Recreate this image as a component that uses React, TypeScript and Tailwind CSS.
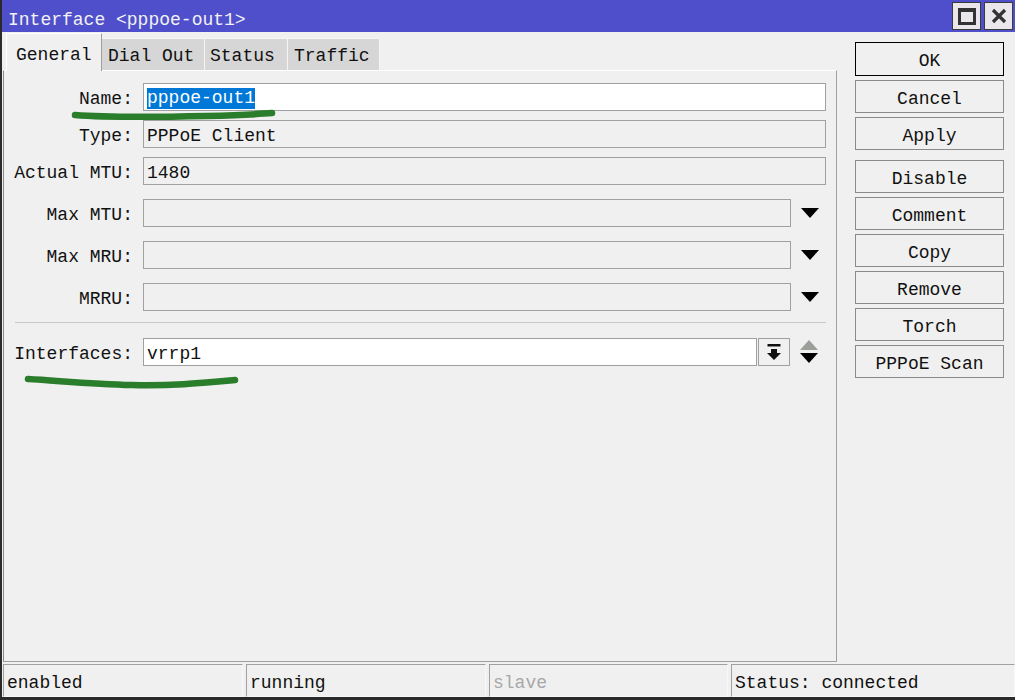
import React from 'react';

const mono = { fontFamily: '"Liberation Mono", "DejaVu Sans Mono", monospace' };

const Field: React.FC<{ label: string; value?: string; white?: boolean; selected?: boolean; w: string; mt: string }> = ({ label, value, white, selected, w, mt }) => (
  <div className={`flex items-center h-[28px] ${mt}`}>
    <div className="w-[131px] text-right pr-[2px] pt-[4px]">{label}:</div>
    <div className={`${w} h-[28px] ml-[8px] border border-[#a0a0a0] flex items-center pl-[3px] pt-[3px] ${white ? 'bg-white' : 'bg-[#f0f0f0]'}`}>
      {selected ? <span className="bg-[#0078d7] text-white leading-[21px]">{value}</span> : <span>{value}</span>}
    </div>
  </div>
);

const DownTri = () => (
  <svg width="20" height="12" viewBox="0 0 20 12" className="ml-[9px]">
    <polygon points="1,1 19,1 10,11" fill="#000" />
  </svg>
);

const App: React.FC = () => {
  const buttons = ['Cancel', 'Apply', 'Disable', 'Comment', 'Copy', 'Remove', 'Torch', 'PPPoE Scan'];
  const status = [
    { t: 'enabled', c: 'text-[#111]', w: 'w-[240px]' },
    { t: 'running', c: 'text-[#111]', w: 'w-[240px]' },
    { t: 'slave', c: 'text-[#a8a8a8]', w: 'w-[239px]' },
    { t: 'Status: connected', c: 'text-[#111]', w: 'flex-1' },
  ];

  return (
    <div className="relative w-[1015px] h-[700px] bg-[#f0f0f0] flex flex-col text-[18px] leading-[20px] text-[#111] border-l-2 border-b-[3px] border-[#2a2a2a] overflow-hidden" style={mono}>
      {/* title bar */}
      <div className="h-[32px] bg-[#4f4fcc] flex items-center justify-between pl-[6px] pr-[2px] shrink-0">
        <span className="text-[#f2f2f2] pt-[7px]">Interface &lt;pppoe-out1&gt;</span>
        <div className="flex gap-[3px]">
          <div className="w-[29px] h-[28px] bg-[#e9e7ec] border border-[#3a3a3a] flex items-center justify-center">
            <div className="w-[18px] h-[17px] border-[3px] border-[#333] border-t-[4px]" />
          </div>
          <div className="w-[29px] h-[28px] bg-[#e9e7ec] border border-[#3a3a3a] flex items-center justify-center">
            <svg width="16" height="16" viewBox="0 0 16 16">
              <path d="M2 2 L14 14 M14 2 L2 14" stroke="#333" strokeWidth="3.2" />
            </svg>
          </div>
        </div>
      </div>

      <div className="flex flex-1 min-h-0">
        {/* left pane */}
        <div className="w-[834px] ml-[1px] flex flex-col">
          <div className="h-[38px] flex items-end pl-[3px]">
            <div className="h-[38px] w-[96px] bg-[#f0f0f0] border-t border-l border-white border-r border-r-[#a0a0a0] pl-[9px] pt-[11px] -mb-px relative z-10">General</div>
            <div className="h-[32px] w-[103px] bg-[#d6d6d6] border-t border-r border-[#f5f5f5] pl-[6px] pt-[7px]">Dial Out</div>
            <div className="h-[32px] w-[83px] bg-[#d6d6d6] border-t border-r border-[#f5f5f5] pl-[5px] pt-[7px]">Status</div>
            <div className="h-[32px] w-[92px] bg-[#d6d6d6] border-t border-r border-[#f5f5f5] pl-[6px] pt-[7px]">Traffic</div>
          </div>
          <div className="flex-1 border border-[#a0a0a0] border-t-white border-l-[#888] flex flex-col">
            <Field label="Name" value="pppoe-out1" white selected w="w-[683px]" mt="mt-[12px]" />
            <Field label="Type" value="PPPoE Client" w="w-[683px]" mt="mt-[9px]" />
            <Field label="Actual MTU" value="1480" w="w-[683px]" mt="mt-[9px]" />
            <div className="flex items-center mt-[14px]">
              <Field label="Max MTU" w="w-[648px]" mt="" />
              <DownTri />
            </div>
            <div className="flex items-center mt-[14px]">
              <Field label="Max MRU" w="w-[648px]" mt="" />
              <DownTri />
            </div>
            <div className="flex items-center mt-[14px]">
              <Field label="MRRU" w="w-[648px]" mt="" />
              <DownTri />
            </div>
            <div className="ml-[11px] w-[811px] h-px bg-[#c8c8c8] mt-[11px]" />
            <div className="flex items-center h-[28px] mt-[15px]">
              <div className="w-[131px] text-right pr-[2px] pt-[4px]">Interfaces:</div>
              <div className="w-[614px] h-[28px] ml-[8px] border border-[#a0a0a0] bg-white flex items-center pl-[3px] pt-[3px]">vrrp1</div>
              <div className="w-[32px] h-[28px] ml-[1px] border border-[#a0a0a0] bg-[#f0f0f0] flex items-center justify-center">
                <svg width="16" height="20" viewBox="0 0 16 20">
                  <rect x="1.5" y="2" width="13" height="2.5" fill="#111" />
                  <rect x="5" y="7" width="6" height="4" fill="#111" />
                  <polygon points="1,11 15,11 8,18" fill="#111" />
                </svg>
              </div>
              <svg width="20" height="26" viewBox="0 0 20 26" className="ml-[9px]">
                <polygon points="10,1 19,11 1,11" fill="#9aa098" />
                <polygon points="1,14 19,14 10,24" fill="#000" />
              </svg>
            </div>
          </div>
        </div>

        {/* right buttons */}
        <div className="ml-[18px] w-[149px] flex flex-col gap-[4px] pt-[10px]">
          <div className="h-[34px] border border-black flex items-center justify-center pt-[4px]">OK</div>
          {buttons.map((b) => (
            <div key={b} className={`h-[33px] border border-[#8a8a8a] flex items-center justify-center pt-[4px] ${b === 'Disable' ? 'mt-[6px]' : ''}`}>
              {b}
            </div>
          ))}
        </div>
      </div>

      {/* status bar */}
      <div className="h-[35px] flex gap-[3px] pl-[1px] pt-[2px] shrink-0">
        {status.map((s) => (
          <div key={s.t} className={`${s.w} h-[33px] border border-[#a0a0a0] border-b-[#f8f8f8] border-r-[#f8f8f8] flex items-center pl-[3px] pt-[4px] ${s.c}`}>
            {s.t}
          </div>
        ))}
      </div>

      {/* green marker annotations */}
      <svg className="absolute left-0 top-0 pointer-events-none" width="1015" height="700">
        <path d="M73 115 C 110 118, 160 117, 205 116 S 255 114, 270 113" stroke="#2a7d2a" strokeWidth="6.5" fill="none" strokeLinecap="round" />
        <path d="M26 379 C 60 381, 90 384, 130 385 S 200 383, 233 380" stroke="#2a7d2a" strokeWidth="6.5" fill="none" strokeLinecap="round" />
      </svg>
    </div>
  );
};

export default App;
